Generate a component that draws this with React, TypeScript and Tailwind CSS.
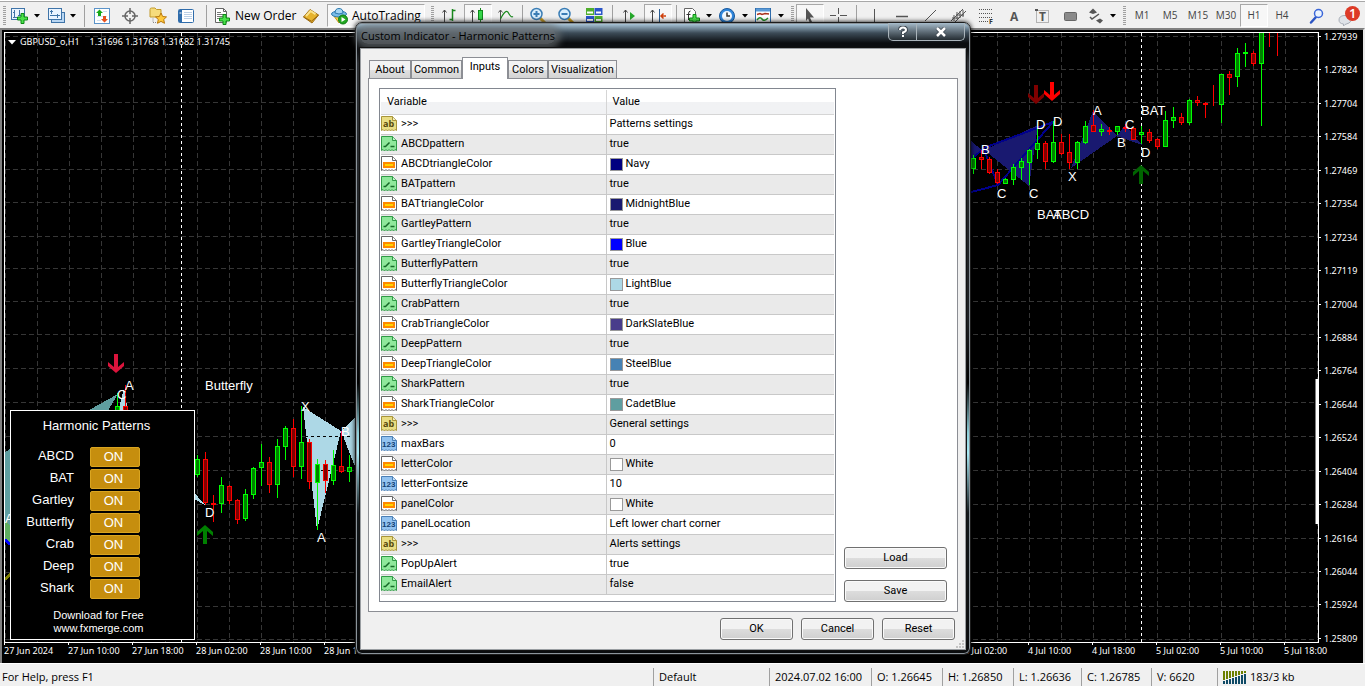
import { useState } from 'react'
import type { ReactNode } from 'react'

type Candle = [number, number, number, number, number, 'G' | 'R']

// x, high, open/close top, open/close bottom, low, direction
const candles: Candle[] = [
  [117, 393, 406, 412, 420, 'G'],
  [125, 385, 406, 412, 420, 'R'],
  [197, 455, 459, 475, 477, 'G'],
  [205, 452, 459, 503, 505, 'R'],
  [213, 495, 503, 505, 522, 'R'],
  [221, 477, 485, 504, 513, 'G'],
  [229, 485, 486, 501, 504, 'R'],
  [237, 499, 500, 520, 524, 'R'],
  [245, 489, 494, 519, 521, 'G'],
  [253, 467, 468, 495, 499, 'G'],
  [261, 444, 462, 468, 486, 'G'],
  [269, 457, 462, 485, 493, 'R'],
  [277, 439, 446, 485, 498, 'G'],
  [285, 426, 428, 447, 460, 'G'],
  [293, 419, 428, 467, 477, 'R'],
  [301, 406, 442, 467, 479, 'G'],
  [309, 439, 442, 482, 489, 'R'],
  [317, 459, 464, 483, 530, 'G'],
  [325, 460, 464, 481, 493, 'R'],
  [333, 450, 465, 481, 485, 'G'],
  [341, 431, 466, 472, 473, 'R'],
  [349, 455, 467, 472, 482, 'G'],
  [973, 155, 158, 169, 174, 'G'],
  [981, 150, 157, 160, 169, 'R'],
  [989, 157, 159, 173, 174, 'R'],
  [997, 169, 172, 183, 184, 'R'],
  [1005, 178, 179, 184, 184, 'G'],
  [1013, 164, 167, 180, 185, 'G'],
  [1021, 158, 161, 168, 180, 'G'],
  [1029, 149, 150, 163, 185, 'G'],
  [1037, 122, 143, 150, 159, 'G'],
  [1045, 141, 143, 162, 169, 'R'],
  [1053, 121, 142, 162, 163, 'G'],
  [1061, 134, 142, 154, 155, 'R'],
  [1069, 134, 152, 163, 169, 'R'],
  [1077, 141, 142, 163, 169, 'G'],
  [1085, 121, 126, 143, 144, 'G'],
  [1093, 110, 125, 132, 132, 'R'],
  [1101, 124, 129, 132, 136, 'G'],
  [1109, 127, 130, 132, 135, 'R'],
  [1117, 126, 126, 132, 135, 'G'],
  [1125, 124, 127, 129, 132, 'R'],
  [1133, 127, 128, 140, 140, 'R'],
  [1141, 126, 132, 135, 144, 'G'],
  [1149, 129, 132, 141, 143, 'R'],
  [1157, 138, 139, 147, 149, 'R'],
  [1165, 111, 120, 147, 147, 'G'],
  [1173, 107, 117, 121, 128, 'G'],
  [1181, 113, 117, 123, 125, 'R'],
  [1189, 99, 100, 123, 125, 'G'],
  [1197, 96, 100, 103, 106, 'R'],
  [1205, 102, 103, 105, 118, 'R'],
  [1213, 85, 104, 105, 106, 'R'],
  [1221, 74, 74, 105, 123, 'G'],
  [1229, 71, 74, 78, 95, 'R'],
  [1237, 48, 53, 77, 87, 'G'],
  [1245, 43, 52, 54, 67, 'G'],
  [1253, 51, 53, 64, 66, 'R'],
  [1261, 30, 30, 64, 126, 'G'],
  [1269, 30, 30, 30, 47, 'R'],
  [1277, 30, 30, 30, 56, 'R'],
]

const prices = [
  '1.27939', '1.27824', '1.27704', '1.27584', '1.27469', '1.27354', '1.27234', '1.27119', '1.27004', '1.26884',
  '1.26764', '1.26644', '1.26524', '1.26404', '1.26284', '1.26164', '1.26044', '1.25924', '1.25809',
]

const times = [
  '27 Jun 2024', '27 Jun 10:00', '27 Jun 18:00', '28 Jun 02:00', '28 Jun 10:00', '28 Jun 18:00', '1 Jul 02:00',
  '1 Jul 10:00', '1 Jul 18:00', '2 Jul 02:00', '2 Jul 10:00', '2 Jul 18:00', '3 Jul 02:00', '3 Jul 10:00',
  '3 Jul 18:00', '4 Jul 02:00', '4 Jul 10:00', '4 Jul 18:00', '5 Jul 02:00', '5 Jul 10:00', '5 Jul 18:00',
]

const gridRows = [36, 69, 102, 136, 169, 202, 236, 268, 301, 334, 368, 402, 436, 470, 504, 538, 572, 606, 639]

const letters: [string, number, number][] = [
  ['A', 125, 390], ['C', 117, 399], ['Butterfly', 205, 390], ['X', 301, 411], ['B', 341, 436], ['A', 317, 542],
  ['D', 205, 517], ['A', 5, 523], ['B', 981, 154], ['C', 997, 198], ['C', 1029, 198], ['D', 1036, 129],
  ['D', 1053, 126], ['A', 1093, 115], ['B', 1117, 147], ['C', 1125, 129], ['D', 1141, 157], ['X', 1068, 181],
  ['BAT', 1141, 115], ['BAT', 1037, 219], ['ABCD', 1053, 219],
]

// arrow tip x/y, direction and colour
const arrows: [number, number, 'up' | 'down', string][] = [
  [116, 373, 'down', '#dc143c'],
  [205, 525, 'up', '#008000'],
  [1036, 104, 'down', '#800000'],
  [1052, 101, 'down', '#ff0000'],
  [1141, 165, 'up', '#006400'],
]

type Kind = 'text' | 'bool' | 'color' | 'num'

const inputs: { kind: Kind; name: string; value: string; swatch?: string }[] = [
  { kind: 'text', name: '>>>', value: 'Patterns settings' },
  { kind: 'bool', name: 'ABCDpattern', value: 'true' },
  { kind: 'color', name: 'ABCDtriangleColor', value: 'Navy', swatch: '#000080' },
  { kind: 'bool', name: 'BATpattern', value: 'true' },
  { kind: 'color', name: 'BATtriangleColor', value: 'MidnightBlue', swatch: '#191970' },
  { kind: 'bool', name: 'GartleyPattern', value: 'true' },
  { kind: 'color', name: 'GartleyTriangleColor', value: 'Blue', swatch: '#0000ff' },
  { kind: 'bool', name: 'ButterflyPattern', value: 'true' },
  { kind: 'color', name: 'ButterflyTriangleColor', value: 'LightBlue', swatch: '#add8e6' },
  { kind: 'bool', name: 'CrabPattern', value: 'true' },
  { kind: 'color', name: 'CrabTriangleColor', value: 'DarkSlateBlue', swatch: '#483d8b' },
  { kind: 'bool', name: 'DeepPattern', value: 'true' },
  { kind: 'color', name: 'DeepTriangleColor', value: 'SteelBlue', swatch: '#4682b4' },
  { kind: 'bool', name: 'SharkPattern', value: 'true' },
  { kind: 'color', name: 'SharkTriangleColor', value: 'CadetBlue', swatch: '#5f9ea0' },
  { kind: 'text', name: '>>>', value: 'General settings' },
  { kind: 'num', name: 'maxBars', value: '0' },
  { kind: 'color', name: 'letterColor', value: 'White', swatch: '#ffffff' },
  { kind: 'num', name: 'letterFontsize', value: '10' },
  { kind: 'color', name: 'panelColor', value: 'White', swatch: '#ffffff' },
  { kind: 'num', name: 'panelLocation', value: 'Left lower chart corner' },
  { kind: 'text', name: '>>>', value: 'Alerts settings' },
  { kind: 'bool', name: 'PopUpAlert', value: 'true' },
  { kind: 'bool', name: 'EmailAlert', value: 'false' },
]

function Grip() {
  return (
    <div className="flex w-2 justify-center">
      <div className="h-[19px] w-[3px] bg-[repeating-linear-gradient(#a0a0a0_0_1px,transparent_1px_2px)]" />
    </div>
  )
}

function Sep({ className = 'w-2' }: { className?: string }) {
  return (
    <div className={`flex justify-center ${className}`}>
      <div className="h-[22px] w-px bg-[#a0a0a0]" />
    </div>
  )
}

function Tool({ label, active, children }: { label: string; active?: boolean; children: ReactNode }) {
  return (
    <button
      aria-label={label}
      className={`flex h-[23px] w-7 items-center justify-center ${
        active ? 'border border-[#a8a8a8] border-r-white border-b-white bg-[#f7f7f7]' : ''
      }`}
    >
      <svg width="18" height="18" viewBox="0 0 18 18" fill="none">
        {children}
      </svg>
    </button>
  )
}

function DropTool({ label, children }: { label: string; children: ReactNode }) {
  return (
    <button aria-label={label} className="flex h-[23px] w-9 items-center gap-1 pl-[2px]">
      <svg width="20" height="18" viewBox="0 0 20 18" fill="none">
        {children}
      </svg>
      <svg width="6" height="4" viewBox="0 0 6 4">
        <path d="M0 0h6L3 3.5z" fill="#000" />
      </svg>
    </button>
  )
}

function Plus({ x, y }: { x: number; y: number }) {
  return (
    <path
      d={`M${x + 4} ${y + 0.5}h3v3.5h3.5v3H${x + 7}v3.5h-3V${y + 7}H${x + 0.5}v-3h3.5z`}
      fill="#4be04b"
      stroke="#0b8a14"
    />
  )
}

function Toolbar() {
  const [frame, setFrame] = useState('H1')
  return (
    <header className="flex h-7 shrink-0 items-center overflow-hidden border-t border-white bg-[#f0f0f0] pt-[2px] shadow-[inset_0_1px_0_#a8a8a8]">
      <Grip />
      <DropTool label="New chart">
        <rect x="1.5" y="1.5" width="13" height="11" fill="#eaf4ff" stroke="#3f74a8" />
        <path d="M4.500 3v8M3 5.500h2M9.500 3v5M8 8.500h3M3 10.500h9" stroke="#3f74a8" />
        <Plus x={7} y={6} />
      </DropTool>
      <DropTool label="Profiles">
        <rect x="5.500" y="5.500" width="13" height="10" fill="#b9d6f2" stroke="#3f74a8" />
        <rect x="2.500" y="1.500" width="13" height="11" fill="#eaf4ff" stroke="#3f74a8" />
        <path d="M5.500 3v4M4 8.500h10M11.500 7v4M4 4.500h3" stroke="#3f74a8" />
      </DropTool>
      <Sep />
      <Tool label="Market watch">
        <rect x="1.500" y="1.500" width="15" height="15" fill="#fff" stroke="#5b93c9" />
        <path d="M4 9.500h10M4 13.500h4M10 4.500h4" stroke="#cfe0f0" />
        <path d="M6.500 2.500l3.500 3.500H8v3H5V6H3z" fill="#18a818" />
        <path d="M11.500 15.500L8 12h2V9h3v3h2z" fill="#e8501c" />
      </Tool>
      <Tool label="Data window">
        <circle cx="9" cy="9" r="5" stroke="#666" strokeWidth="1.500" />
        <path d="M9 1v6M9 11v6M1 9h6M11 9h6" stroke="#666" strokeWidth="1.500" />
      </Tool>
      <Tool label="Navigator">
        <path d="M1 2.500q0-1.500 1.500-1.500H6l1.500 1.500H12V10H1z" fill="#f6dc7c" stroke="#c29b2c" />
        <path d="M4 11.500v4h5" stroke="#888" strokeDasharray="1 1" />
        <path d="M12 6l1.700 3.500 3.800.4-2.800 2.600.8 3.800L12 14.400l-3.500 1.900.8-3.800L6.500 9.900l3.800-.4z" fill="#ffc93c" stroke="#b9780c" />
      </Tool>
      <Tool label="Terminal">
        <rect x="1.500" y="2.500" width="15" height="13" rx="1" fill="#fff" stroke="#2f6cab" />
        <path d="M3.500 3v12" stroke="#2f6cab" strokeWidth="3" />
        <path d="M7 5.500h8M7 7.500h8M7 9.500h8M7 11.500h8" stroke="#bcd0e6" />
        <path d="M2.500 6h2" stroke="#fff" />
      </Tool>
      <Sep className="w-3" />
      <button className="flex h-[23px] w-[85px] items-center gap-1 pl-[2px] text-xs whitespace-nowrap">
        <svg width="17" height="18" viewBox="0 0 17 18" fill="none" className="shrink-0">
          <path d="M1.500 1.500h8l3 3v11h-11z" fill="#fff" stroke="#666" />
          <path d="M9.500 1.500v3h3" stroke="#666" />
          <path d="M3 5.500h4M3 7.500h7M3 9.500h6M3 11.500h4" stroke="#777" />
          <Plus x={5} y={7} />
        </svg>
        New Order
      </button>
      <Tool label="MetaEditor">
        <path d="M1.500 10L8 2.500 16.500 8l-6.500 8z" fill="#e6b32e" stroke="#9c6a10" />
        <path d="M1.500 10l8 4.200L16.500 8" stroke="#9c6a10" />
        <path d="M4 9l4.500-5 5 3.200" stroke="#fbe38c" strokeWidth="2" />
      </Tool>
      <button className="ml-[2px] flex h-[23px] w-[98px] items-center gap-1 border border-[#a8a8a8] border-r-white border-b-white bg-[#f7f7f7] pl-[3px] text-xs">
        <svg width="17" height="18" viewBox="0 0 17 18" fill="none" className="shrink-0">
          <path d="M2.500 8.500L8 16l5.500-7.500z" fill="#f4cf4c" stroke="#c59718" />
          <ellipse cx="8" cy="7" rx="7.500" ry="3" fill="#79bce8" stroke="#2c79ae" />
          <path d="M4 6Q4 1.500 8 1.500T12 6Q8 8 4 6z" fill="#a6d7f5" stroke="#2c79ae" />
          <circle cx="12" cy="12.500" r="4.500" fill="#23a823" stroke="#0e7c12" />
          <path d="M10.500 10l4 2.500-4 2.500z" fill="#fff" />
        </svg>
        AutoTrading
      </button>
      <div className="w-[3px]" />
      <Grip />
      <Tool label="Bar chart">
        <path d="M3.500 3v13M1.500 5.500l2-2.500 2 2.500" stroke="#444" />
        <path d="M11.500 2v12M11.500 3.500h3M8.500 12.500h3" stroke="#18881c" strokeWidth="1.500" />
      </Tool>
      <Tool label="Candlesticks" active>
        <path d="M3.500 3v13M1.500 5.500l2-2.500 2 2.500" stroke="#444" />
        <path d="M11.500 1v15" stroke="#18881c" />
        <rect x="9.500" y="3.500" width="4" height="9" fill="#35d64a" stroke="#0e8a1a" />
      </Tool>
      <Tool label="Line chart">
        <path d="M3.500 3v13M1.500 5.500l2-2.500 2 2.500" stroke="#555" />
        <path d="M3.500 12Q9 1 11.500 6T16 9.500" stroke="#18881c" strokeWidth="1.200" />
      </Tool>
      <Sep className="w-1" />
      <Tool label="Zoom in">
        <path d="M11 11l5 5" stroke="#c99a1e" strokeWidth="3" />
        <circle cx="7.500" cy="7" r="5.500" fill="#d9eefc" stroke="#3a7db5" strokeWidth="1.500" />
        <path d="M4.500 7h6M7.500 4v6" stroke="#3a7db5" strokeWidth="2" />
      </Tool>
      <Tool label="Zoom out">
        <path d="M11 11l5 5" stroke="#c99a1e" strokeWidth="3" />
        <circle cx="7.500" cy="7" r="5.500" fill="#d9eefc" stroke="#3a7db5" strokeWidth="1.500" />
        <path d="M4.500 7h6" stroke="#3a7db5" strokeWidth="2" />
      </Tool>
      <Tool label="Tile windows">
        <rect x="1" y="1" width="8" height="7" fill="#4fae2c" />
        <rect x="9.500" y="1" width="8" height="7" fill="#2a55c8" />
        <rect x="1" y="9" width="8" height="7" fill="#2a55c8" />
        <rect x="9.500" y="9" width="8" height="7" fill="#4fae2c" />
        <path d="M2 5.500h6M11 5.500h5M2 13h6M11 13h5" stroke="#fff" strokeWidth="2" />
      </Tool>
      <Sep className="w-2" />
      <Tool label="Auto scroll">
        <path d="M4.500 3v13M2.500 5.500l2-2.500 2 2.500" stroke="#444" />
        <path d="M9 5l5 4-5 4z" fill="#24a82a" />
      </Tool>
      <Tool label="Chart shift" active>
        <path d="M3.500 3v13M1.500 5.500l2-2.500 2 2.500" stroke="#444" />
        <path d="M10.500 2v14" stroke="#2c5e94" />
        <path d="M17 9h-5M14.500 6.500L12 9l2.500 2.500" stroke="#d0400c" strokeWidth="1.500" />
      </Tool>
      <Sep />
      <DropTool label="Indicators">
        <path d="M2.500 1.500h8l3 3v11h-11z" fill="#fff" stroke="#666" />
        <path d="M8.500 4Q6.500 4 6.500 7v6M4.500 7.500h4" stroke="#333" />
        <Plus x={7} y={7} />
      </DropTool>
      <DropTool label="Periodicity">
        <circle cx="9" cy="9" r="7.500" fill="#2f86dc" stroke="#17589c" />
        <circle cx="9" cy="9" r="5" fill="#f3f9ff" />
        <path d="M9 5.500V9h3" stroke="#333" strokeWidth="1.500" />
      </DropTool>
      <DropTool label="Templates">
        <rect x="1.500" y="1.500" width="15" height="14" fill="#fff" stroke="#2f6cab" />
        <path d="M2 3h14" stroke="#5b9ad6" strokeWidth="3" />
        <path d="M3 7.500l3-1 2 1 3-1 4 .5" stroke="#a8321c" strokeWidth="1.500" />
        <path d="M3 13q3-4 5-1t6-1" stroke="#24962a" strokeWidth="1.500" />
      </DropTool>
      <Grip />
      <Tool label="Cursor" active>
        <path d="M5 1l8 9.500H9l2 4.500-2 1-2-4.500L5 14z" fill="#555" />
      </Tool>
      <Tool label="Crosshair">
        <path d="M9.500 1v6M9.500 10v7M1 8.500h6M11 8.500h7" stroke="#555" />
      </Tool>
      <Sep />
      <Tool label="Vertical line">
        <path d="M9.500 2v14" stroke="#555" />
      </Tool>
      <Tool label="Horizontal line">
        <path d="M3 9.500h12" stroke="#555" strokeWidth="1.500" />
      </Tool>
      <Tool label="Trendline">
        <path d="M4 14L15 3" stroke="#555" />
      </Tool>
      <Tool label="Channel">
        <path d="M2 14L14 2M6 15L17 4M5 8v6M8 5v7M11 4v7M14 3v7M3 11h7M7 8h8" stroke="#555" />
      </Tool>
      <Tool label="Fibonacci">
        <path d="M2 2.500h14M2 6.500h14M2 10.500h14M2 14.500h9" stroke="#555" strokeDasharray="1 1" />
        <text x="12" y="17" fontSize="7" fill="#333" fontFamily="Open Sans, sans-serif" fontWeight="700">F</text>
      </Tool>
      <Tool label="Text">
        <text x="5" y="14" fontSize="12" fill="#555" fontFamily="Open Sans, sans-serif" fontWeight="700">A</text>
      </Tool>
      <Tool label="Text label">
        <rect x="3.500" y="3.500" width="12" height="12" stroke="#777" strokeDasharray="1 1" />
        <text x="6" y="14" fontSize="12" fill="#555" fontFamily="Open Sans, sans-serif" fontWeight="700">T</text>
        <path d="M2 3h3" stroke="#555" strokeWidth="2" />
      </Tool>
      <Tool label="Rectangle">
        <rect x="3.500" y="5.500" width="12" height="8" rx="1" fill="#8a8a8a" stroke="#666" />
      </Tool>
      <DropTool label="Arrows">
        <path d="M7 1.500l4 4-4 1.500-4-1.500z" fill="#555" />
        <path d="M14 16.500l-4-3 4-2 3 2z" fill="#555" />
        <path d="M4 10l2 2 7-5" stroke="#555" strokeWidth="1.500" />
      </DropTool>
      <Grip />
      <div className="flex text-[10px] text-[#444]">
        {['M1', 'M5', 'M15', 'M30', 'H1', 'H4'].map((f) => (
          <button
            key={f}
            onClick={() => setFrame(f)}
            className={`h-[23px] w-7 ${
              frame === f ? 'border border-[#a8a8a8] border-r-white border-b-white bg-[#f7f7f7]' : ''
            }`}
          >
            {f}
          </button>
        ))}
      </div>
      <div className="ml-auto flex items-center gap-3 pr-1">
        <button aria-label="Search">
          <svg width="16" height="18" viewBox="0 0 16 18" fill="none">
            <path d="M7 10l-5 5.500" stroke="#2c55c4" strokeWidth="2.500" strokeLinecap="round" />
            <circle cx="9.500" cy="6.500" r="4" fill="#eaf3ff" stroke="#3a66d8" strokeWidth="1.500" />
          </svg>
        </button>
        <button aria-label="Notifications">
          <svg width="24" height="22" viewBox="0 0 24 22" fill="none">
            <path d="M2 15q0-4 5-4.500h6q5 3-1 7.500l-4 1.500-1.500 1.500V19Q2 18.500 2 15z" fill="#dfe3e8" stroke="#a9afb8" />
            <circle cx="15.500" cy="8.500" r="7.500" fill="#dd3a26" />
            <text x="12" y="13" fontSize="13" fill="#fff" fontFamily="Open Sans, sans-serif" fontWeight="600">1</text>
          </svg>
        </button>
      </div>
    </header>
  )
}

function Plot() {
  return (
    <svg width="100%" height="100%" className="absolute inset-0" aria-label="GBPUSD_o H1">
      {/* coordinates below are counted from the window corner */}
      <g transform="translate(-5 -33)" shapeRendering="crispEdges">
        <g stroke="#363636" strokeDasharray="5 3">
          {Array.from({ length: 42 }, (_, i) => (
            <path key={i} d={`M${5.5 + i * 32} 33V642`} />
          ))}
          {gridRows.map((y) => (
            <path key={y} d={`M5 ${y + 0.5}H1318`} />
          ))}
        </g>
        <g stroke="#fff" strokeDasharray="3 3">
          <path d="M181.500 33V642M1141.500 33V642" />
        </g>

        <path d="M89 410L118 394 107 412z" fill="#5f9ea0" />
        <path d="M118 412L124 388 128 412z" fill="#add8e6" />
        <path d="M5 452L12 448V545L5 520z" fill="#5f9ea0" />
        <path d="M5 520l7 8v18l-7-5z" fill="#5fae60" />
        <path d="M5 540l8 6" stroke="#0000ff" strokeWidth="3" />
        <path d="M5 579l9-8" stroke="#808000" strokeWidth="3" />
        <path d="M192 490L205 505 194 499z" fill="#add8e6" />
        <path d="M303 407L341 431 317 530z" fill="#add8e6" />
        <path d="M341 431L372 402V510z" fill="#add8e6" />
        <path d="M305 436.500h46M309 470.500h36" stroke="#000" strokeDasharray="3 3" />

        <path d="M960 132L982 150 960 170z" fill="#191970" />
        <path d="M984 150L1038 125 1029 186z" fill="#191970" />
        <path d="M1071 168L1093 111 1117 136z" fill="#191970" />
        <path d="M1117 136L1125 125 1142 145z" fill="#191970" />
        <path d="M960 170L984 148 1053 122 998 185 984 150M960 195L998 185" fill="none" stroke="#00008b" strokeWidth="2" />

        {candles.map(([x, high, top, bottom, low, dir]) => (
          <g key={x} fill={dir === 'G' ? '#008000' : '#800000'} stroke={dir === 'G' ? '#00ff00' : '#ff0000'}>
            <path d={`M${x + 0.5} ${high}V${low}`} />
            {bottom > top && <rect x={x - 1.5} y={top + 0.5} width="4" height={bottom - top - 1} />}
          </g>
        ))}
      </g>
      <g transform="translate(-5 -33)">
        {arrows.map(([x, y, dir, color]) => (
          <path
            key={x}
            transform={`translate(${x} ${y}) scale(1 ${dir === 'up' ? -1 : 1})`}
            d="M0 0L-8-7V-11L-2-6V-19H2V-6L8-11V-7z"
            fill={color}
          />
        ))}
        <g fill="#fff" fontSize="13" fontFamily="Liberation Sans, Arial, sans-serif">
          {letters.map(([t, x, y]) => (
            <text key={`${t}${x}`} x={x} y={y}>
              {t}
            </text>
          ))}
        </g>
      </g>
      <path d="M1312 346V491" stroke="#fff" strokeWidth="3" />
    </svg>
  )
}

function PatternPanel() {
  const [on, setOn] = useState<Record<string, boolean>>({})
  return (
    <section className="absolute bottom-[2px] left-[5px] w-[185px] border border-white bg-black pt-[7px] pb-1 text-center font-['Liberation_Sans',Arial,sans-serif] text-[13px] text-white">
      <h2 className="pr-3 leading-4">Harmonic Patterns</h2>
      <div className="mt-3 flex flex-col pl-[10px]">
        {['ABCD', 'BAT', 'Gartley', 'Butterfly', 'Crab', 'Deep', 'Shark'].map((p) => (
          <div key={p} className="flex h-[22px] gap-4">
            <span id={`p-${p}`} className="w-[53px] text-right leading-[19px]">
              {p}
            </span>
            <button
              aria-labelledby={`p-${p}`}
              onClick={() => setOn({ ...on, [p]: on[p] === false })}
              className="mt-px h-5 w-[50px] rounded-[2px] border border-[#daa520] bg-[#c68e0e] pr-[3px] leading-[18px]"
            >
              {on[p] === false ? 'OFF' : 'ON'}
            </button>
          </div>
        ))}
      </div>
      <p className="mt-[9px] pr-2 text-[11px] leading-[13px]">
        Download for Free
        <br />
        www.fxmerge.com
      </p>
    </section>
  )
}

function Chart() {
  return (
    <main className="flex min-h-0 flex-1 flex-col overflow-hidden border-t-2 border-r-2 border-l-2 border-t-[#808080] border-r-[#e8e8e8] border-l-[#808080] bg-black pt-[2px] pl-[2px] font-['Noto_Sans',sans-serif] text-[9px] text-white">
      <div className="flex min-h-0 flex-1">
        <div className="relative flex-1 border border-white">
          <Plot />
          <div className="absolute top-[3px] left-[3px] flex items-center leading-3">
            <svg width="8" height="5" viewBox="0 0 8 5">
              <path d="M0 0h8L4 4.500z" fill="#fff" />
            </svg>
            <span className="ml-1">GBPUSD_o,H1</span>
            <span className="ml-[10px]">1.31696 1.31768 1.31682 1.31745</span>
          </div>
          <PatternPanel />
        </div>
        <ul className="flex w-11 shrink-0 flex-col justify-between">
          {prices.map((p) => (
            <li key={p} className="flex items-center gap-[3px] leading-[9px]">
              <span className="h-px w-[2px] bg-white" />
              {p}
            </li>
          ))}
        </ul>
      </div>
      <div className="flex h-5 shrink-0 overflow-hidden">
        {times.map((t) => (
          <div key={t} className="w-16 shrink-0 whitespace-nowrap">
            <div className="h-[2px] w-px bg-white" />
            <div className="leading-3">{t}</div>
          </div>
        ))}
      </div>
    </main>
  )
}

function KindIcon({ kind }: { kind: Kind }) {
  const tone = {
    text: ['#e9dd83', '#a8953a'],
    bool: ['#8fe89b', '#2f9a45'],
    color: ['#ffffff', '#666666'],
    num: ['#93c3f0', '#4a7fb5'],
  }[kind]
  return (
    <svg width="16" height="16" viewBox="0 0 16 16" fill="none" className="shrink-0">
      <path
        d="M.5.500h11l4 4v10l-1.500-1-1.500 1.500-1.500-1.500-1.500 1.500L8 13.500 6.500 15 5 13.500 3.500 15 2 13.500.5 14.500z"
        fill={tone[0]}
        stroke={tone[1]}
      />
      <path d="M11.500.500v4h4" fill="#fff" fillOpacity=".5" stroke={tone[1]} />
      {kind === 'bool' && <path d="M2.500 10.500h2l4-4M9.500 10.500h4" stroke="#166b28" strokeWidth="1.500" />}
      {kind === 'color' && (
        <>
          <rect x="2" y="6" width="12" height="6" fill="#ff8a00" />
          <rect x="4" y="8" width="8" height="2" fill="#ffd400" />
        </>
      )}
      {kind === 'text' && (
        <text x="2" y="11" fontSize="9" fill="#55480c" fontFamily="Open Sans, sans-serif" fontWeight="700">ab</text>
      )}
      {kind === 'num' && (
        <text x="1" y="11" fontSize="8" fill="#123f73" fontFamily="Liberation Sans, sans-serif" fontWeight="700">123</text>
      )}
    </svg>
  )
}

function WinButton({ className, children }: { className: string; children: ReactNode }) {
  return (
    <button
      className={`h-[22px] rounded-[3px] border border-[#707070] bg-linear-to-b from-[#f2f2f2] from-50% via-[#dddddd] via-50% to-[#cfcfcf] shadow-[inset_0_0_0_1px_#fafafa] ${className}`}
    >
      {children}
    </button>
  )
}

function Tabs() {
  const [tab, setTab] = useState('Inputs')
  const tabs = [
    ['About', 'w-[42px]'],
    ['Common', 'w-[51px]'],
    ['Inputs', 'w-[46px]'],
    ['Colors', 'w-[40px]'],
    ['Visualization', 'w-[69px]'],
  ]
  return (
    <div role="tablist" className="flex h-[21px] items-end pl-px">
      {tabs.map(([t, width]) => (
        <button
          key={t}
          role="tab"
          aria-selected={tab === t}
          onClick={() => setTab(t)}
          className={`border border-b-0 border-[#8c8e94] ${width} ${
            tab === t
              ? '-mb-px h-[22px] bg-white pb-1'
              : 'h-[18px] bg-linear-to-b from-[#f3f3f3] from-50% via-[#e2e2e2] via-50% to-[#d3d3d3]'
          }`}
        >
          {t}
        </button>
      ))}
    </div>
  )
}

function IndicatorDialog() {
  return (
    <div
      role="dialog"
      aria-labelledby="dlg-title"
      className="absolute top-[22px] left-[355px] w-[616px] rounded-[7px] border border-[#1c1c1c] bg-[linear-gradient(#b4d2e6,#3c4b57_10px,#0b0d10_20px,#0b0d10_26px,#2c2f33_40px,#1d2023_300px,#000_360px,#8fd0da_410px,#a8eaf5_430px,#12181b_490px,#0a0c0e)] px-1 pb-1 text-[11px] leading-[14px] shadow-[inset_0_0_0_1px_#8b949b,0_0_5px_#000]"
    >
      <div className="flex h-[25px] items-start justify-between">
        <h1
          id="dlg-title"
          className="mt-[5px] rounded-lg bg-[#6d7377]/70 px-px font-['Open_Sans',sans-serif] text-[11px] leading-4 text-black shadow-[0_0_6px_5px_#6d737799]"
        >
          Custom Indicator - Harmonic Patterns
        </h1>
        <div className="mr-px flex h-[18px] rounded-b-[5px] border border-t-0 border-[#aab4bb] bg-linear-to-b from-[#a7bccb] to-[#252d33]">
          <button aria-label="Help" className="flex w-7 items-center justify-center border-r border-[#aab4bb]">
            <svg width="10" height="12" viewBox="0 0 10 12" fill="none">
              <path d="M2 4Q2 1.500 5 1.500T8 4Q8 5.500 5 6.500V8M5 9v2" stroke="#3c4650" strokeWidth="4" />
              <path d="M2 4Q2 1.500 5 1.500T8 4Q8 5.500 5 6.500V8M5 9v2" stroke="#fff" strokeWidth="2" />
            </svg>
          </button>
          <button aria-label="Close" className="flex w-[47px] items-center justify-center">
            <svg width="12" height="10" viewBox="0 0 12 10" fill="none">
              <path d="M2 1l8 8M10 1L2 9" stroke="#3c4650" strokeWidth="4" />
              <path d="M2 1l8 8M10 1L2 9" stroke="#fff" strokeWidth="2.500" />
            </svg>
          </button>
        </div>
      </div>

      <div className="relative border border-[#9a9ea2] bg-[#f0f0f0] px-[7px] pt-2 pb-2 shadow-[0_0_0_1px_#111]">
        <Tabs />
        <div className="flex items-end justify-between gap-2 border border-[#8c8e94] bg-white py-[9px] pr-[10px] pl-[10px]">
          <div className="min-w-0 flex-1 border border-[#828790] p-px pb-[6px]">
            <table className="w-full table-fixed border-collapse text-left">
              <thead>
                <tr className="h-6 bg-linear-to-b from-white from-50% to-[#f1f2f4] to-50%">
                  <th className="w-[225px] border-r border-b border-[#d5d5d5] pl-[6px] font-normal">Variable</th>
                  <th className="border-b border-[#d5d5d5] pl-[6px] font-normal">Value</th>
                </tr>
              </thead>
              <tbody>
                {inputs.map(({ kind, name, value, swatch }, i) => (
                  <tr key={i} className="h-5 border-b border-[#c8c8c8] even:bg-[#eaeaea]">
                    <td className="border-r border-[#c8c8c8]">
                      <div className="flex items-center gap-1">
                        <KindIcon kind={kind} />
                        {name}
                      </div>
                    </td>
                    <td>
                      <div className="flex items-center gap-[3px] pl-[3px]">
                        {swatch && (
                          <span className="h-[13px] w-[13px] border border-[#999]" style={{ background: swatch }} />
                        )}
                        {value}
                      </div>
                    </td>
                  </tr>
                ))}
              </tbody>
            </table>
          </div>
          <div className="flex flex-col gap-[11px]">
            <WinButton className="w-[103px]">Load</WinButton>
            <WinButton className="w-[103px]">Save</WinButton>
          </div>
        </div>
        <div className="mt-[6px] flex justify-end gap-2 pr-[3px] pb-px">
          <WinButton className="w-[73px]">OK</WinButton>
          <WinButton className="w-[73px]">Cancel</WinButton>
          <WinButton className="w-[73px]">Reset</WinButton>
        </div>
        <svg width="9" height="9" viewBox="0 0 9 9" className="absolute right-px bottom-px">
          <path d="M7 1h2v2H7zM4 4h2v2H4zM7 4h2v2H7zM1 7h2v2H1zM4 7h2v2H4zM7 7h2v2H7z" fill="#c4c4c4" />
        </svg>
      </div>
    </div>
  )
}

function StatusBar() {
  const cells = [
    ['Default', 'w-[116px]'],
    ['2024.07.02 16:00', 'w-[102px]'],
    ['O: 1.26645', 'w-[71px]'],
    ['H: 1.26850', 'w-[71px]'],
    ['L: 1.26636', 'w-[68px]'],
    ['C: 1.26785', 'w-[70px]'],
    ['V: 6620', 'w-[66px]'],
  ]
  return (
    <footer className="flex h-[23px] shrink-0 items-center border-t border-white bg-[#f0f0f0] pt-1 text-[11px] leading-[18px] whitespace-nowrap">
      <span className="flex-1 pl-[2px]">For Help, press F1</span>
      {cells.map(([text, width]) => (
        <span key={text} className={`border-l border-[#a0a0a0] pl-[5px] ${width}`}>
          {text}
        </span>
      ))}
      <span className="flex w-[148px] items-center gap-1 border-l border-[#a0a0a0] pl-[5px]">
        <svg width="23" height="13" viewBox="0 0 23 13">
          {Array.from({ length: 8 }, (_, i) => (
            <g key={i}>
              <rect x={i * 3} width="2" height={9 - i} fill="#6b8000" />
              <rect x={i * 3} y={10 - i} width="2" height={3 + i} fill="#0f4a66" />
            </g>
          ))}
        </svg>
        183/3 kb
      </span>
    </footer>
  )
}

export default function App() {
  return (
    <div className="relative flex h-screen flex-col overflow-hidden bg-[#f0f0f0] font-['Open_Sans',sans-serif] text-black">
      <Toolbar />
      <Chart />
      <StatusBar />
      <div className="font-['Roboto',sans-serif]">
        <IndicatorDialog />
      </div>
    </div>
  )
}
